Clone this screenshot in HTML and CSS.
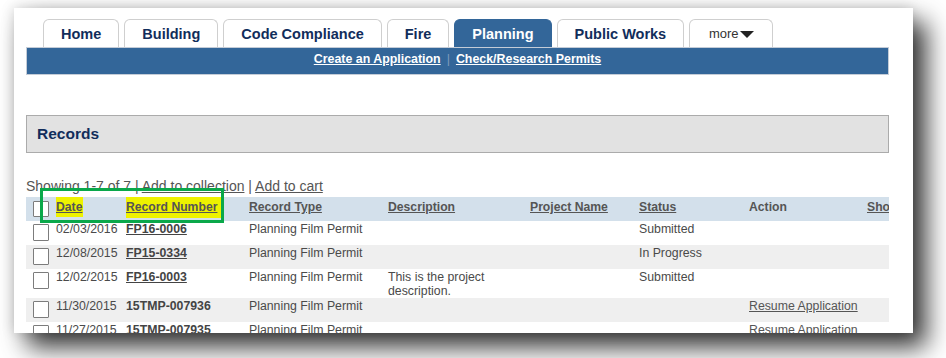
FILE: index.html
```html
<!DOCTYPE html>
<html lang="en">
<head>
<meta charset="utf-8">
<title>Records</title>
<link rel="stylesheet" href="styles.css">
</head>
<body>
<div class="frame">
  <div class="page">
    <nav class="tabs">
      <a class="tab">Home</a>
      <a class="tab">Building</a>
      <a class="tab">Code Compliance</a>
      <a class="tab">Fire</a>
      <a class="tab active">Planning</a>
      <a class="tab">Public Works</a>
      <a class="tab more">more<svg class="caret" width="14" height="7" viewBox="0 0 14 7"><polygon points="0,0 14,0 7,7" fill="#222"/></svg></a>
    </nav>
    <div class="subnav">
      <a>Create an Application</a><span class="sep">|</span><a>Check/Research Permits</a>
    </div>
    <div class="records-head">Records</div>
    <div class="results">
      <div class="summary">Showing 1-7 of 7 | <a>Add to collection</a> | <a>Add to cart</a></div>
      <div class="table-wrap">
        <table class="grid">
          <colgroup>
            <col class="c-check"><col class="c-date"><col class="c-rec"><col class="c-type"><col class="c-desc"><col class="c-proj"><col class="c-status"><col class="c-action"><col class="c-map">
          </colgroup>
          <thead>
            <tr>
              <th class="chk"><span class="box hbox"></span></th>
              <th><a class="hl hl-date">Date</a></th>
              <th><a class="hl hl-rec">Record Number</a></th>
              <th><a>Record Type</a></th>
              <th><a>Description</a></th>
              <th><a>Project Name</a></th>
              <th><a>Status</a></th>
              <th>Action</th>
              <th><a>Show on Map</a></th>
            </tr>
          </thead>
          <tbody>
            <tr>
              <td class="chk"><span class="box"></span></td>
              <td>02/03/2016</td>
              <td><a class="rec">FP16-0006</a></td>
              <td>Planning Film Permit</td>
              <td></td><td></td>
              <td>Submitted</td>
              <td></td><td></td>
            </tr>
            <tr class="alt">
              <td class="chk"><span class="box"></span></td>
              <td>12/08/2015</td>
              <td><a class="rec">FP15-0334</a></td>
              <td>Planning Film Permit</td>
              <td></td><td></td>
              <td>In Progress</td>
              <td></td><td></td>
            </tr>
            <tr>
              <td class="chk"><span class="box"></span></td>
              <td>12/02/2015</td>
              <td><a class="rec">FP16-0003</a></td>
              <td>Planning Film Permit</td>
              <td>This is the project description.</td>
              <td></td>
              <td>Submitted</td>
              <td></td><td></td>
            </tr>
            <tr class="alt">
              <td class="chk"><span class="box"></span></td>
              <td>11/30/2015</td>
              <td><span class="rec-plain">15TMP-007936</span></td>
              <td>Planning Film Permit</td>
              <td></td><td></td><td></td>
              <td><a class="act">Resume Application</a></td>
              <td></td>
            </tr>
            <tr>
              <td class="chk"><span class="box"></span></td>
              <td>11/27/2015</td>
              <td><span class="rec-plain">15TMP-007935</span></td>
              <td>Planning Film Permit</td>
              <td></td><td></td><td></td>
              <td><a class="act">Resume Application</a></td>
              <td></td>
            </tr>
          </tbody>
        </table>
      </div>
      <div class="annot"></div>
    </div>
  </div>
</div>
</body>
</html>
```

FILE: styles.css
```css
html, body {
  margin: 0;
  padding: 0;
  background: #ffffff;
}

body {
  font-family: "Liberation Sans", Arial, sans-serif;
  padding: 8px 0 0 14px;
  min-height: 358px;
  box-sizing: border-box;
}

.frame {
  width: 899px;
  height: 325px;
  background: #ffffff;
  overflow: hidden;
  box-shadow: 13px 14px 24px rgba(0, 0, 0, 0.8), -1px -1px 12px rgba(0, 0, 0, 0.14);
}

.page {
  padding: 11px 24px 0 12px;
}

.tabs {
  display: flex;
  gap: 5px;
  padding-left: 17px;
  align-items: flex-end;
}

.tab {
  height: 28px;
  box-sizing: border-box;
  padding: 0 17px;
  border: 1px solid #cfcfcf;
  border-bottom: 0;
  border-radius: 6px 6px 0 0;
  background: #ffffff;
  display: flex;
  align-items: center;
  justify-content: center;
  font-size: 14.5px;
  font-weight: bold;
  color: #112d5b;
  white-space: nowrap;
}

.tab.active {
  background: #336699;
  border-color: #336699;
  color: #ffffff;
}

.tab.more {
  width: 84px;
  padding: 0;
  font-size: 13px;
  font-weight: normal;
  color: #333333;
}

.caret {
  margin-left: 1px;
  margin-top: 1px;
}

.subnav {
  height: 28px;
  box-sizing: border-box;
  border: 1px solid #c4ccd7;
  background: #336699;
  text-align: center;
  padding-top: 4px;
  font-size: 12.4px;
  line-height: 14px;
  font-weight: bold;
  color: #ffffff;
}

.subnav a {
  color: #ffffff;
  text-decoration: underline;
}

.subnav .sep {
  color: #7f9cbb;
  font-weight: normal;
  margin: 0 6px;
}

.records-head {
  margin-top: 40px;
  height: 38px;
  box-sizing: border-box;
  border: 1px solid #ababab;
  background: #e2e2e2;
  padding-left: 10px;
  line-height: 36px;
  font-size: 15.5px;
  font-weight: bold;
  color: #112d5b;
}

.results {
  position: relative;
  margin-top: 25px;
}

.summary {
  font-size: 14px;
  line-height: 16px;
  color: #555555;
  white-space: nowrap;
}

.summary a {
  color: #555555;
  text-decoration: underline;
}

.table-wrap {
  margin-top: 3px;
  width: 863px;
  overflow: hidden;
}

.grid {
  width: 900px;
  table-layout: fixed;
  border-collapse: collapse;
  font-size: 12.3px;
  line-height: 14px;
  color: #4a4a4a;
}

.c-check { width: 30px; }
.c-date { width: 70px; }
.c-rec { width: 123px; }
.c-type { width: 139px; }
.c-desc { width: 142px; }
.c-proj { width: 109px; }
.c-status { width: 110px; }
.c-action { width: 118px; }
.c-map { width: 59px; }

.grid thead tr {
  background: #d3e0eb;
  height: 24px;
}

.grid th {
  text-align: left;
  vertical-align: top;
  padding: 3px 0 0 0;
  font-size: 12.2px;
  font-weight: bold;
  color: #555555;
  white-space: nowrap;
  overflow: hidden;
}

.grid th a {
  color: #555555;
  text-decoration: underline;
}

.grid th.chk,
.grid td.chk {
  padding: 3px 0 4px 7px;
}

.grid th.chk {
  padding-top: 4px;
  padding-bottom: 0;
}

.box {
  display: block;
  width: 16px;
  height: 17px;
  box-sizing: border-box;
  border: 1px solid #7c7c7c;
  border-radius: 1px;
  background: #ffffff;
}

.hbox {
  height: 16px;
}

.hl {
  background: #eef200;
  padding: 7px 1px 3px 0;
}

.hl-rec {
  padding: 7px 4px 4px 4px;
  margin: 0 -4px;
}

.grid td {
  vertical-align: top;
  padding: 1px 0 0 0;
}

.grid tbody tr {
  background: #ffffff;
}

.grid tbody tr.alt {
  background: #efefef;
}

.rec {
  font-weight: bold;
  color: #444444;
  text-decoration: underline;
}

.rec-plain {
  font-weight: bold;
  color: #444444;
}

.act {
  color: #555555;
  text-decoration: underline;
}

.annot {
  position: absolute;
  left: 14px;
  top: 10px;
  width: 184px;
  height: 35px;
  box-sizing: border-box;
  border: 3px solid #0aa84a;
  pointer-events: none;
}
```
